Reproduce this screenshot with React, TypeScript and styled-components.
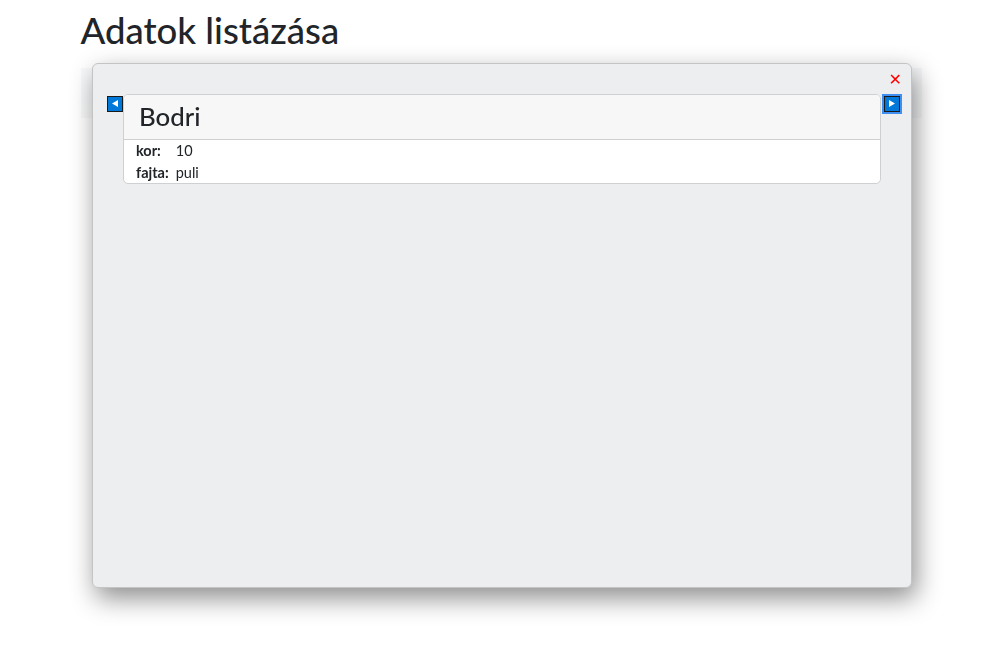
import React from "react";
import styled, { createGlobalStyle } from "styled-components";

const Global = createGlobalStyle`
  html, body { margin: 0; padding: 0; background: #fff; }
  body { font-family: "Lato", "Noto Sans", sans-serif; color: #212529; }
`;

const Page = styled.div`
  width: 841px;
  margin: 0 auto;
  padding-top: 9px;
`;

const Title = styled.h1`
  margin: 0 0 15px 0;
  font-size: 36.5px;
  font-weight: 500;
  line-height: 1.2;
`;

const Strip = styled.div`
  height: 50px;
  background: #f8f9fa;
`;

const Overlay = styled.div`
  position: fixed;
  inset: 0;
  display: flex;
  align-items: center;
  justify-content: center;
`;

const Modal = styled.div`
  width: 820px;
  height: 525px;
  box-sizing: border-box;
  margin: 2px 0 0 2px;
  background: #edeef0;
  border: 1px solid #c4c4c4;
  border-radius: 6px;
  box-shadow: 4px 10px 26px rgba(0, 0, 0, 0.45);
  display: flex;
  flex-direction: column;
`;

const TopBar = styled.div`
  height: 30px;
  display: flex;
  justify-content: flex-end;
  align-items: center;
  padding-right: 9px;
`;

const Close = styled.button`
  border: 0;
  background: transparent;
  color: #ff0000;
  font-size: 16px;
  line-height: 1;
  padding: 0;
  margin-top: 3px;
  cursor: pointer;
  font-family: "DejaVu Sans", sans-serif;
`;

const Body = styled.div`
  display: flex;
  align-items: flex-start;
  padding: 0 11px 0 14px;
`;

const Nav = styled.button<{ $focused?: boolean }>`
  width: 16px;
  height: 16px;
  box-sizing: border-box;
  padding: 0;
  margin-top: 2px;
  margin-left: ${(p) => (p.$focused ? "3px" : "0")};
  background: #0078d7;
  border: 1px solid #1a1a1a;
  outline: ${(p) => (p.$focused ? "2px solid #3f8ff0" : "none")};
  display: flex;
  align-items: center;
  justify-content: center;
  flex: none;
  cursor: pointer;
`;

const Card = styled.div`
  flex: 1;
  background: #fff;
  border: 1px solid #cfd0d2;
  border-radius: 5px;
  overflow: hidden;
`;

const CardHeader = styled.div`
  background: #f7f7f7;
  border-bottom: 1px solid #cfd0d2;
  height: 45px;
  box-sizing: border-box;
  padding: 0 15px;
  display: flex;
  align-items: center;
`;

const Name = styled.h3`
  margin: 0;
  font-size: 25.8px;
  font-weight: 500;
  line-height: 1.2;
`;

const Table = styled.table`
  border-collapse: collapse;
  margin: 0 0 0 12px;
  font-size: 14.5px;
`;

const Row = styled.tr<{ $h: number }>`
  height: ${(p) => p.$h}px;
`;

const Th = styled.th`
  text-align: left;
  font-weight: 700;
  padding: 0 7px 0 0;
`;

const Td = styled.td`
  padding: 0;
`;

const Tri = ({ dir }: { dir: "l" | "r" }) => (
  <svg width="6" height="7" viewBox="0 0 6 7">
    {dir === "l" ? <path d="M6 0 L0 3.5 L6 7 Z" fill="#fff" /> : <path d="M0 0 L6 3.5 L0 7 Z" fill="#fff" />}
  </svg>
);

const rows = [
  { k: "kor:", v: "10", h: 22 },
  { k: "fajta:", v: "puli", h: 21 },
];

export default function App() {
  return (
    <>
      <Global />
      <Page>
        <Title>Adatok listázása</Title>
        <Strip />
      </Page>
      <Overlay>
        <Modal>
          <TopBar>
            <Close aria-label="bezárás">✕</Close>
          </TopBar>
          <Body>
            <Nav aria-label="előző">
              <Tri dir="l" />
            </Nav>
            <Card>
              <CardHeader>
                <Name>Bodri</Name>
              </CardHeader>
              <Table>
                <tbody>
                  {rows.map((r) => (
                    <Row key={r.k} $h={r.h}>
                      <Th>{r.k}</Th>
                      <Td>{r.v}</Td>
                    </Row>
                  ))}
                </tbody>
              </Table>
            </Card>
            <Nav $focused aria-label="következő">
              <Tri dir="r" />
            </Nav>
          </Body>
        </Modal>
      </Overlay>
    </>
  );
}
